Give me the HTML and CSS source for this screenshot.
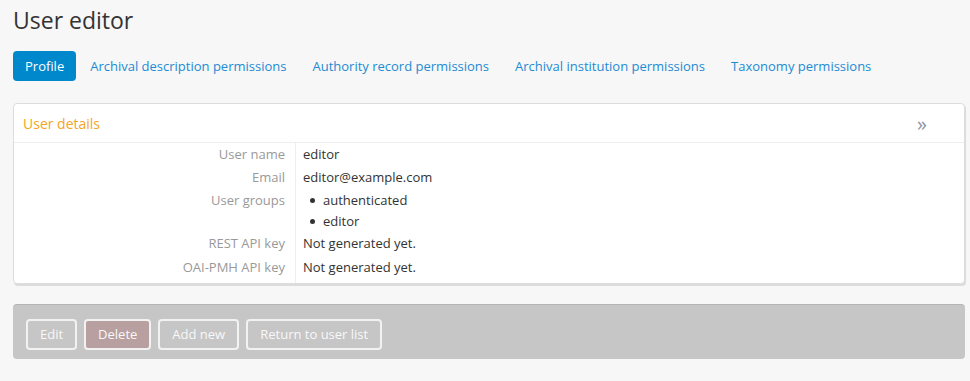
FILE: index.html
```html
<!DOCTYPE html>
<html lang="en">
<head>
    <meta charset="UTF-8">
    <title>User editor</title>
    <link rel="stylesheet" href="styles.css">
</head>
<body>

<div class="page">
    <h1 class="title">User editor</h1>

    <ul class="tabs">
        <li><a class="active" href="#">Profile</a></li>
        <li><a href="#">Archival description permissions</a></li>
        <li><a href="#">Authority record permissions</a></li>
        <li><a href="#">Archival institution permissions</a></li>
        <li><a href="#">Taxonomy permissions</a></li>
    </ul>

    <section class="panel">
        <div class="panel-head">
            <span class="panel-title">User details</span>
            <span class="panel-toggle">&raquo;</span>
        </div>
        <div class="panel-body">
            <div class="field">
                <div class="label">User name</div>
                <div class="value">editor</div>
            </div>
            <div class="field">
                <div class="label">Email</div>
                <div class="value">editor@example.com</div>
            </div>
            <div class="field">
                <div class="label">User groups</div>
                <div class="value">
                    <ul class="groups">
                        <li>authenticated</li>
                        <li>editor</li>
                    </ul>
                </div>
            </div>
            <div class="field">
                <div class="label">REST API key</div>
                <div class="value">Not generated yet.</div>
            </div>
            <div class="field">
                <div class="label">OAI-PMH API key</div>
                <div class="value">Not generated yet.</div>
            </div>
        </div>
    </section>

    <div class="actions">
        <a class="btn" href="#">Edit</a>
        <a class="btn btn-delete" href="#">Delete</a>
        <a class="btn" href="#">Add new</a>
        <a class="btn" href="#">Return to user list</a>
    </div>
</div>

</body>
</html>
```

FILE: styles.css
```css
/* General */
* {
    box-sizing: border-box;
    margin: 0;
    padding: 0;
}

body {
    font-family: "Open Sans", "Liberation Sans", sans-serif;
    font-size: 13px;
    color: #333333;
    background-color: #f7f7f7;
}

a {
    text-decoration: none;
}

.page {
    padding: 4px 13px 20px 13px;
    width: 952px;
    box-sizing: content-box;
}

/* Title */
.title {
    font-size: 23px;
    font-weight: normal;
    color: #333333;
    line-height: 32px;
    margin-bottom: 15px;
}

/* Tabs */
.tabs {
    list-style: none;
    display: flex;
    margin-bottom: 22px;
}

.tabs a {
    display: block;
    height: 30px;
    line-height: 30px;
    padding: 0 12px;
    margin-right: 2px;
    border-radius: 4px;
    color: #1d8bd4;
}

.tabs a.active {
    background-color: #0088cc;
    color: #ffffff;
}

/* Panel */
.panel {
    background-color: #ffffff;
    border: 1px solid #dddddd;
    border-radius: 4px;
    box-shadow: 1px 2px 0 #dcdcdc;
    margin-bottom: 20px;
}

.panel-head {
    display: flex;
    justify-content: space-between;
    align-items: center;
    height: 39px;
    padding: 0 20px 0 9px;
    border-bottom: 1px solid #eeeeee;
}

.panel-title {
    color: #f5a623;
    font-size: 14px;
}

.panel-toggle {
    color: #8a94a6;
    font-size: 20px;
    line-height: 1;
    padding-top: 2px;
    margin-right: 17px;
}

.field {
    display: flex;
}

.label {
    width: 282px;
    flex: none;
    text-align: right;
    color: #999999;
    padding: 2px 10px 1px 0;
    border-right: 1px solid #eeeeee;
    line-height: 20px;
}

.value {
    padding: 2px 8px 1px 7px;
    line-height: 20px;
}

.field:first-child .label,
.field:first-child .value {
    padding-top: 1px;
}

.field:last-child .label,
.field:last-child .value {
    padding-top: 3px;
    padding-bottom: 6px;
}

.groups {
    list-style: none;
    padding-left: 6px;
    margin-bottom: -2px;
}

.groups li {
    position: relative;
    padding-left: 14px;
    line-height: 21px;
}

.groups li::before {
    content: "";
    position: absolute;
    left: 1px;
    top: 8px;
    width: 5px;
    height: 5px;
    border-radius: 50%;
    background-color: #333333;
}

/* Actions */
.actions {
    display: flex;
    gap: 7px;
    background-color: #c6c6c6;
    border-radius: 4px;
    border-top: 1px solid #b5b5b5;
    padding: 14px 13px 9px 13px;
}

.btn {
    display: block;
    height: 31px;
    line-height: 27px;
    padding: 0 12px;
    border: 2px solid #f2f2f2;
    border-radius: 4px;
    color: #f8f8f8;
}

.btn-delete {
    background-color: #b8a0a0;
}
```
